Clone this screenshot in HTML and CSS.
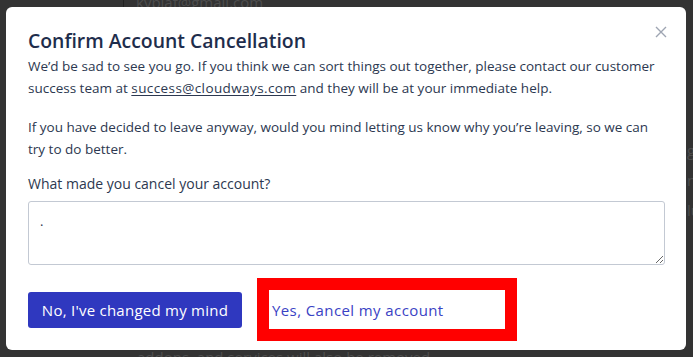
FILE: index.html
```html
<!DOCTYPE html>
<html>
<head>
<meta charset="utf-8">
<link rel="stylesheet" href="styles.css">
</head>
<body>
<div class="page">
  <div class="page-top">kypiaf@gmail.com</div>
  <div class="page-right">
    <span>g</span>
    <span>n</span>
    <span>lu</span>
  </div>
  <div class="page-bottom">addons, and services will also be removed</div>
</div>

<div class="modal">
  <button class="close" aria-label="Close">
    <svg width="12" height="12" viewBox="0 0 12 12"><path d="M1 1L11 11M11 1L1 11" stroke="#9ea5b2" stroke-width="1.4" fill="none"/></svg>
  </button>
  <h2 class="title">Confirm Account Cancellation</h2>
  <p class="text">We’d be sad to see you go. If you think we can sort things out together, please contact our customer success team at <a href="#" class="mail">success@cloudways.com</a> and they will be at your immediate help.</p>
  <p class="text gap">If you have decided to leave anyway, would you mind letting us know why you’re leaving, so we can try to do better.</p>
  <label class="label">What made you cancel your account?</label>
  <textarea class="reason">.</textarea>
  <div class="actions">
    <button class="btn-primary">No, I've changed my mind</button>
    <a href="#" class="btn-link">Yes, Cancel my account</a>
  </div>
</div>
</body>
</html>
```

FILE: styles.css
```css
* { box-sizing: border-box; }
html, body { margin: 0; padding: 0; }
body {
  width: 693px;
  height: 357px;
  overflow: hidden;
  background: #333333;
  font-family: "Open Sans", "Liberation Sans", sans-serif;
  position: relative;
}
.page {
  height: 357px;
  display: flex;
  flex-direction: column;
  justify-content: space-between;
  color: #4d4d4d;
  font-size: 15px;
}
.page-top {
  margin-left: 123px;
  padding-left: 12px;
  border-left: 1px solid #222;
  margin-top: -8px;
  line-height: 20px;
}
.page-right {
  align-self: flex-end;
  display: flex;
  flex-direction: column;
  gap: 10px;
  width: 6px;
  overflow: hidden;
  white-space: nowrap;
}
.page-bottom {
  margin-left: 137px;
  margin-bottom: -10px;
  line-height: 20px;
}
.modal {
  position: absolute;
  left: 6px;
  top: 7px;
  width: 680px;
  height: 343px;
  background: #fff;
  border-radius: 6px;
  padding: 21px 22px 0 22px;
  color: #2c3850;
}
.close {
  position: absolute;
  right: 19px;
  top: 19px;
  border: 0;
  background: none;
  padding: 0;
  width: 12px;
  height: 12px;
  display: block;
}
.close svg { display: block; }
.title {
  margin: 0;
  font-size: 19.4px;
  font-weight: 600;
  color: #1e2d4c;
  line-height: 26px;
}
.text {
  margin: 2px 0 0 0;
  font-size: 13.5px;
  line-height: 21.5px;
}
.text.gap { margin-top: 18px; }
.mail {
  color: #2c3850;
  letter-spacing: 0.4px;
  text-underline-offset: 2px;
}
.label {
  display: block;
  margin-top: 13px;
  font-size: 14px;
  line-height: 21px;
}
.reason {
  display: block;
  margin-top: 7px;
  width: 637px;
  height: 64px;
  border: 1px solid #c3c9d3;
  border-radius: 3px;
  padding: 10px 11px;
  font-family: inherit;
  font-size: 13px;
  color: #2c3850;
  resize: vertical;
}
.actions {
  display: flex;
  align-items: center;
  gap: 27px;
  margin-top: 25px;
}
.btn-primary {
  width: 214px;
  height: 36px;
  background: #2f38bf;
  color: #fff;
  border: 0;
  border-radius: 3px;
  font-family: inherit;
  font-size: 15px;
  font-weight: 500;
  letter-spacing: 0.25px;
}
.btn-link {
  width: 236px;
  height: 39px;
  display: flex;
  align-items: center;
  padding-left: 3px;
  color: #3a42c4;
  text-decoration: none;
  font-size: 15px;
  letter-spacing: 0.4px;
  outline: 12px solid #ff0000;
}
```
